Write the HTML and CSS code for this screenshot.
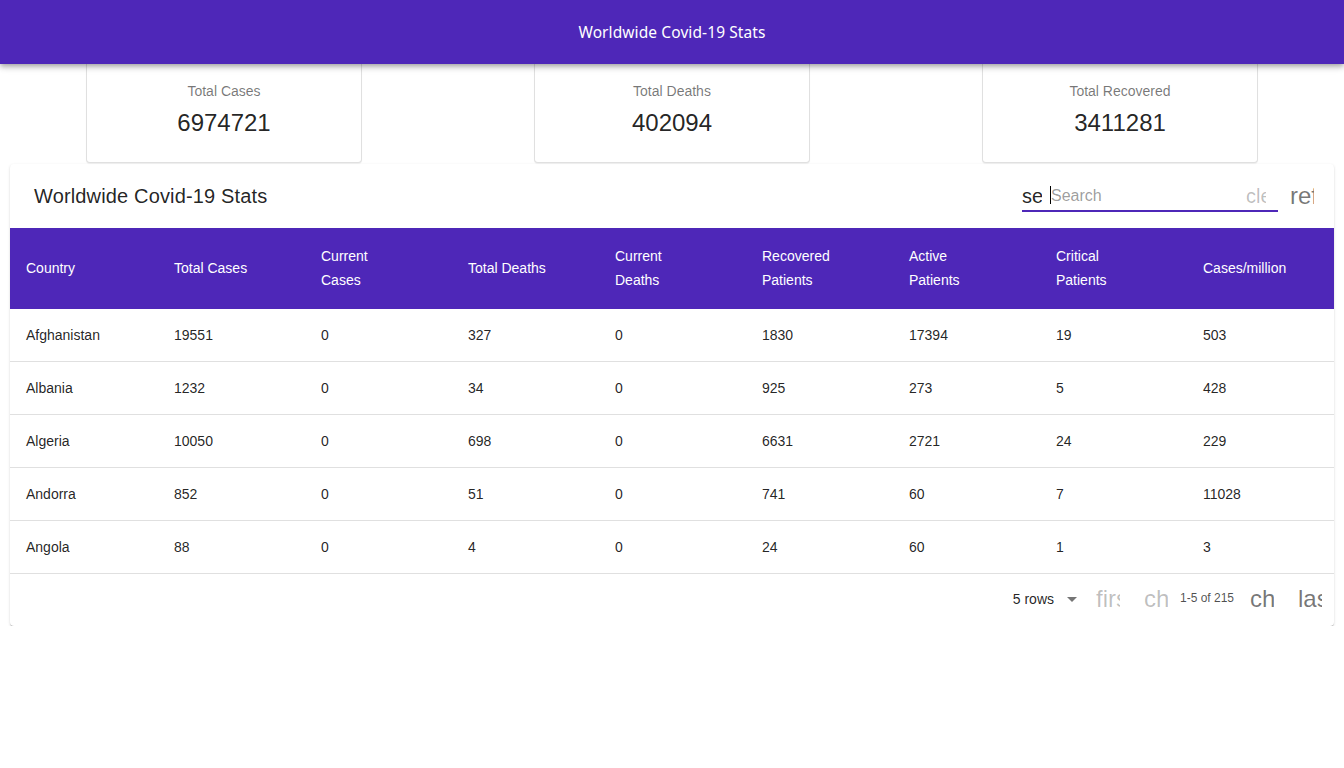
FILE: index.html
```html
<!DOCTYPE html>
<html>
<head>
<meta charset="utf-8">
<title>Worldwide Covid-19 Stats</title>
<link rel="stylesheet" href="styles.css">
</head>
<body>
<header class="appbar">
  <h1 class="appbar-title">Worldwide Covid-19 Stats</h1>
</header>
<main class="page">
  <section class="cards">
    <div class="card-cell">
      <div class="card">
        <p class="card-label">Total Cases</p>
        <p class="card-value">6974721</p>
      </div>
    </div>
    <div class="card-cell">
      <div class="card">
        <p class="card-label">Total Deaths</p>
        <p class="card-value">402094</p>
      </div>
    </div>
    <div class="card-cell">
      <div class="card">
        <p class="card-label">Total Recovered</p>
        <p class="card-value">3411281</p>
      </div>
    </div>
  </section>

  <section class="paper">
    <div class="toolbar">
      <h2 class="toolbar-title">Worldwide Covid-19 Stats</h2>
      <div class="toolbar-actions">
        <div class="search">
          <span class="icon icon-sm icon-dark search-icon">search</span>
          <div class="search-input-wrap">
            <input class="search-input" type="text" placeholder="Search">
          </div>
          <span class="icon icon-sm icon-disabled clear-icon">clear</span>
        </div>
        <button class="icon-btn"><span class="icon icon-lg icon-mid">refresh</span></button>
      </div>
    </div>

    <table class="table">
      <colgroup>
        <col class="col-first">
        <col><col><col><col><col><col><col><col>
      </colgroup>
      <thead>
        <tr>
          <th class="th-single">Country</th>
          <th class="th-single">Total Cases</th>
          <th>Current<br>Cases</th>
          <th class="th-single">Total Deaths</th>
          <th>Current<br>Deaths</th>
          <th>Recovered<br>Patients</th>
          <th>Active<br>Patients</th>
          <th>Critical<br>Patients</th>
          <th class="th-single">Cases/million</th>
        </tr>
      </thead>
      <tbody>
        <tr><td>Afghanistan</td><td>19551</td><td>0</td><td>327</td><td>0</td><td>1830</td><td>17394</td><td>19</td><td>503</td></tr>
        <tr><td>Albania</td><td>1232</td><td>0</td><td>34</td><td>0</td><td>925</td><td>273</td><td>5</td><td>428</td></tr>
        <tr><td>Algeria</td><td>10050</td><td>0</td><td>698</td><td>0</td><td>6631</td><td>2721</td><td>24</td><td>229</td></tr>
        <tr><td>Andorra</td><td>852</td><td>0</td><td>51</td><td>0</td><td>741</td><td>60</td><td>7</td><td>11028</td></tr>
        <tr><td>Angola</td><td>88</td><td>0</td><td>4</td><td>0</td><td>24</td><td>60</td><td>1</td><td>3</td></tr>
      </tbody>
    </table>

    <div class="pagination">
      <div class="rows-select">
        <span>5 rows</span>
        <svg class="caret" width="24" height="24" viewBox="0 0 24 24"><path d="M7 10l5 5 5-5z" fill="rgba(0,0,0,0.54)"/></svg>
      </div>
      <button class="icon-btn"><span class="icon icon-lg icon-disabled">first_page</span></button>
      <button class="icon-btn"><span class="icon icon-lg icon-disabled">chevron_left</span></button>
      <span class="page-caption">1-5 of 215</span>
      <button class="icon-btn"><span class="icon icon-lg icon-mid">chevron_right</span></button>
      <button class="icon-btn"><span class="icon icon-lg icon-mid">last_page</span></button>
    </div>
  </section>
</main>
</body>
</html>
```
FILE: styles.css
```css
* { box-sizing: border-box; }

body {
  margin: 0;
  font-family: "Liberation Sans", Arial, sans-serif;
  color: rgba(0, 0, 0, 0.87);
  background: #fff;
}

.appbar {
  height: 64px;
  background: #4e27b8;
  display: flex;
  align-items: center;
  justify-content: center;
  box-shadow: 0 2px 4px -1px rgba(0,0,0,0.2), 0 4px 5px 0 rgba(0,0,0,0.14), 0 1px 10px 0 rgba(0,0,0,0.12);
  position: relative;
  z-index: 2;
}

.appbar-title {
  margin: 0;
  color: #fff;
  font-family: "Noto Sans", "Open Sans", sans-serif;
  font-weight: 400;
  font-size: 15.5px;
  letter-spacing: 0.1px;
}

.page {
  padding: 0 10px;
}

.cards {
  display: grid;
  grid-template-columns: repeat(3, 1fr);
  margin: 0 -10px;
}

.card-cell {
  display: flex;
  justify-content: center;
}

.card {
  width: 276px;
  height: 99px;
  border: 1px solid rgba(0,0,0,0.12);
  border-top: none;
  border-radius: 0 0 4px 4px;
  background: #fff;
  text-align: center;
  padding: 17px 16px 24px;
  box-shadow: 0 1px 1px rgba(0,0,0,0.06);
}

.card-label {
  margin: 0 0 6px;
  font-size: 14px;
  line-height: 20px;
  color: rgba(0,0,0,0.54);
}

.card-value {
  margin: 0;
  font-size: 24px;
  line-height: 32px;
  color: rgba(0,0,0,0.87);
}

.paper {
  margin-top: 1px;
  background: #fff;
  border-radius: 4px;
  box-shadow: 0 2px 1px -1px rgba(0,0,0,0.2), 0 1px 1px 0 rgba(0,0,0,0.14), 0 1px 3px 0 rgba(0,0,0,0.12);
  overflow: hidden;
}

.toolbar {
  height: 64px;
  display: flex;
  align-items: center;
  justify-content: space-between;
  padding: 0 8px 0 24px;
}

.toolbar-title {
  margin: 0;
  font-size: 20px;
  font-weight: 400;
  letter-spacing: 0.15px;
}

.toolbar-actions {
  display: flex;
  align-items: center;
}

.search {
  width: 256px;
  display: flex;
  align-items: center;
  border-bottom: 2px solid #4e27b8;
  padding-bottom: 4px;
  margin-top: 5px;
}

.search-icon {
  margin-right: 8px;
}

.search-input-wrap {
  flex: 1;
  position: relative;
}

.search-input-wrap::before {
  content: "";
  position: absolute;
  left: 0;
  top: 0;
  width: 1px;
  height: 18px;
  background: #000;
}

.search-input {
  width: 100%;
  border: none;
  outline: none;
  padding: 0 0 0 1px;
  font-family: "Liberation Sans", Arial, sans-serif;
  font-size: 16px;
  line-height: 19px;
  height: 19px;
  color: rgba(0,0,0,0.87);
  background: transparent;
}

.search-input::placeholder {
  color: rgba(0,0,0,0.4);
}

.icon {
  display: inline-block;
  overflow: hidden;
  white-space: nowrap;
  font-family: "Liberation Sans", Arial, sans-serif;
  line-height: 1;
}

.icon-lg { width: 24px; height: 24px; font-size: 24px; }
.icon-sm { width: 20px; height: 20px; font-size: 20px; }
.icon-dark { color: rgba(0,0,0,0.87); }
.icon-mid { color: rgba(0,0,0,0.54); }
.icon-disabled { color: rgba(0,0,0,0.26); }

.clear-icon { margin-right: 12px; }

.icon-btn {
  width: 48px;
  height: 48px;
  padding: 12px;
  border: none;
  background: transparent;
  display: flex;
  align-items: center;
  justify-content: center;
}

.table {
  width: 100%;
  border-collapse: separate;
  border-spacing: 0;
  table-layout: fixed;
}

.col-first { width: 148px; }

.table th {
  background: #4e27b8;
  color: #fff;
  font-weight: 400;
  font-size: 14px;
  line-height: 24px;
  text-align: left;
  padding: 16px;
  height: 81px;
  vertical-align: top;
}

.table th.th-single {
  padding-top: 28px;
}

.table td {
  font-size: 14px;
  line-height: 20px;
  padding: 16px;
  border-bottom: 1px solid #e0e0e0;
  color: rgba(0,0,0,0.87);
}

.pagination {
  height: 52px;
  display: flex;
  align-items: center;
  justify-content: flex-end;
  padding-bottom: 2px;
}

.rows-select {
  display: flex;
  align-items: center;
  font-size: 14px;
}

.rows-select span {
  margin-right: 6px;
}

.page-caption {
  font-size: 12px;
  color: rgba(0,0,0,0.7);
  width: 58px;
  margin-top: -2px;
}
```
